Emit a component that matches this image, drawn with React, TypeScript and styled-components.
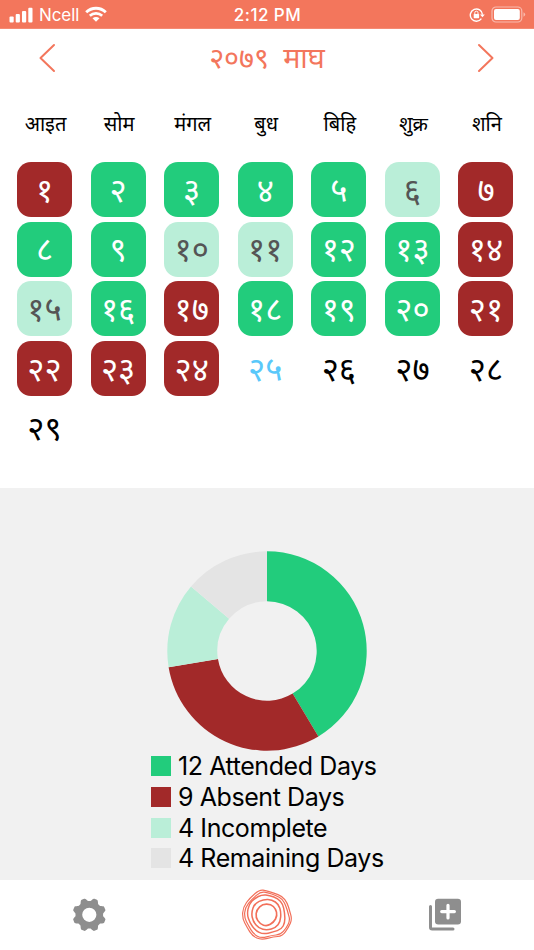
import React from 'react';
import styled, { createGlobalStyle } from 'styled-components';

type Status = 'present' | 'absent' | 'partial' | 'today' | 'upcoming';
type Point = [number, number];

const coral = '#f3765c';
const green = '#22cc7c';
const red = '#a22929';
const mint = '#baeed8';
const silver = '#e4e4e4';
const gray = '#8e8e8e';

const GlobalStyle = createGlobalStyle`
  * { box-sizing: border-box; }
  body {
    margin: 0;
    background: #fff;
    color: #000;
    font-family: Inter, "Noto Sans", "Noto Sans Devanagari", sans-serif;
  }
`;

const Screen = styled.div`
  width: 534px;
  height: 950px;
  display: flex;
  flex-direction: column;
  overflow: hidden;
  background: #fff;
`;

const StatusBar = styled.div`
  flex: 0 0 29px;
  display: grid;
  grid-template-columns: 1fr auto 1fr;
  align-items: center;
  padding: 1px 8px 0 9px;
  background: ${coral};
  border-bottom: 1px solid #f58a73;
  color: #fff;
`;

const StatusGroup = styled.div<{ $end?: boolean }>`
  display: flex;
  align-items: center;
  gap: 6px;
  justify-content: ${p => (p.$end ? 'flex-end' : 'flex-start')};
  svg { display: block; }
`;

const Carrier = styled.span`
  font-size: 17px;
  line-height: 20px;
  letter-spacing: -0.1px;
`;

const Clock = styled.span`
  font-size: 17px;
  line-height: 20px;
  font-weight: 500;
  letter-spacing: 0.45px;
`;

const MonthBar = styled.header`
  flex: 0 0 59px;
  display: flex;
  align-items: center;
  justify-content: space-between;
  padding: 0 38px 2px;
`;

const MonthTitle = styled.h1`
  margin: 0;
  color: ${coral};
  font-size: 28.8px;
  font-weight: 400;
  line-height: 40px;
  word-spacing: 6px;
`;

const ArrowButton = styled.button`
  display: flex;
  padding: 0;
  border: 0;
  background: none;
`;

const Calendar = styled.section`
  flex: 0 0 400px;
  padding: 21px 20.5px 0 17px;
`;

const WeekHeader = styled.div`
  display: flex;
  justify-content: space-between;
  height: 53px;
`;

const Weekday = styled.div`
  width: 55px;
  display: flex;
  justify-content: center;
  padding-left: 2px;
  font-size: 20px;
  line-height: 30px;
  white-space: nowrap;
`;

const DayGrid = styled.div`
  display: grid;
  grid-template-columns: repeat(7, 55px);
  grid-auto-rows: 55px;
  justify-content: space-between;
  row-gap: 4.7px;
`;

const fills: Record<Status, string> = {
  present: green,
  absent: red,
  partial: mint,
  today: 'transparent',
  upcoming: 'transparent',
};

const inks: Record<Status, string> = {
  present: '#fff',
  absent: '#fff',
  partial: '#555',
  today: '#5ac8fa',
  upcoming: '#000',
};

const Day = styled.div<{ $status: Status }>`
  display: flex;
  align-items: center;
  justify-content: center;
  border-radius: 14px;
  background: ${p => fills[p.$status]};
  color: ${p => inks[p.$status]};
  font-size: 33px;
  line-height: 40px;
`;

const Summary = styled.section`
  flex: 0 0 392px;
  display: flex;
  flex-direction: column;
  align-items: center;
  padding-top: 63px;
  background: #f1f1f1;
`;

const Legend = styled.ul`
  width: 232px;
  margin: 0;
  padding: 0;
  list-style: none;
`;

const LegendItem = styled.li`
  height: 30.7px;
  display: flex;
  align-items: center;
  gap: 7px;
  font-size: 25px;
  letter-spacing: -0.42px;
  white-space: nowrap;
`;

const Swatch = styled.span<{ $color: string }>`
  flex: none;
  width: 20px;
  height: 20px;
  background: ${p => p.$color};
`;

const TabBar = styled.nav`
  flex: 1;
  display: grid;
  grid-template-columns: repeat(3, 1fr);
  justify-items: center;
  background: #fff;
`;

const Tab = styled.button`
  width: 80px;
  height: 70px;
  padding: 0;
  border: 0;
  background: none;
  svg { display: block; }
`;

const weekdays = ['आइत', 'सोम', 'मंगल', 'बुध', 'बिहि', 'शुक्र', 'शनि'];

const statusCodes = 'APPPPIAPPIIPPAIPAPPPAAAATUUUU';
const statusByCode: Record<string, Status> = {
  P: 'present',
  A: 'absent',
  I: 'partial',
  T: 'today',
  U: 'upcoming',
};

const toNepali = (n: number) =>
  String(n).replace(/\d/g, d => '०१२३४५६७८९'[Number(d)]);

const summary = [
  { days: 12, label: 'Attended Days', color: green },
  { days: 9, label: 'Absent Days', color: red },
  { days: 4, label: 'Incomplete', color: mint },
  { days: 4, label: 'Remaining Days', color: silver },
];

function Donut() {
  const total = summary.reduce((sum, s) => sum + s.days, 0);
  let start = 0;
  const at = (turn: number, r: number) => {
    const a = turn * Math.PI * 2;
    return `${100 + r * Math.sin(a)} ${100 - r * Math.cos(a)}`;
  };
  return (
    <svg width="200" height="200" viewBox="0 0 200 200">
      {summary.map(s => {
        const from = start / total;
        start += s.days;
        const to = start / total;
        return (
          <path
            key={s.label}
            fill={s.color}
            d={`M${at(from, 99.7)}A99.7 99.7 0 0 1 ${at(to, 99.7)}L${at(to, 49.7)}A49.7 49.7 0 0 0 ${at(from, 49.7)}Z`}
          />
        );
      })}
    </svg>
  );
}

/* Closed curve rounded off through the midpoints of a ring of points. */
function smoothRing(points: Point[]) {
  const mid = (a: Point, b: Point) => `${(a[0] + b[0]) / 2} ${(a[1] + b[1]) / 2}`;
  const n = points.length;
  return (
    `M${mid(points[n - 1], points[0])}` +
    points.map((p, i) => `Q${p[0]} ${p[1]} ${mid(p, points[(i + 1) % n])}`).join('') +
    'Z'
  );
}

const rings: { width: number; points: Point[] }[] = [
  { width: 3.6, points: [[98, 44], [118, 47], [140, 54], [166, 64], [181, 84], [188, 108], [195, 133], [185, 157], [165, 184], [140, 185], [103, 195], [76, 183], [60, 157], [46, 130], [48, 97], [69, 68]] },
  { width: 3.6, points: [[101, 50], [122, 53], [146, 61], [167, 73], [177, 93], [184, 117], [189, 136], [178, 159], [160, 179], [134, 181], [103, 190], [79, 177], [64, 151], [52, 128], [54, 98], [75, 72]] },
  { width: 4.4, points: [[105, 59], [128, 61], [153, 71], [167, 86], [173, 113], [174, 143], [163, 163], [139, 171], [108, 178], [85, 166], [68, 143], [60, 117], [66, 88], [83, 70]] },
  { width: 4.6, points: [[110, 73], [135, 74], [155, 88], [162, 111], [160, 140], [146, 158], [120, 166], [95, 160], [78, 139], [73, 113], [83, 85]] },
  { width: 5, points: [[107, 87], [132, 88], [146, 101], [151, 122], [140, 142], [120, 154], [99, 147], [86, 127], [89, 104]] },
];

function RingsIcon() {
  return (
    <svg width="80" height="70" viewBox="0 15 240 210" fill="none" stroke="#f2705a">
      {rings.map((r, i) => (
        <path key={i} d={smoothRing(r.points)} strokeWidth={r.width} />
      ))}
    </svg>
  );
}

function GearIcon() {
  const outline = Array.from({ length: 160 }, (_, i) => {
    const a = (i / 160) * Math.PI * 2;
    const wave = Math.max(-1, Math.min(0.75, -1.35 * Math.cos(8 * a)));
    const r = 15.5 + 1.7 * wave;
    return `${(40.3 + r * Math.cos(a)).toFixed(2)} ${(34.8 + r * Math.sin(a)).toFixed(2)}`;
  });
  return (
    <svg width="80" height="70" viewBox="0 0 80 70">
      <path
        fill={gray}
        fillRule="evenodd"
        d={`M${outline.join('L')}ZM47.4 34.8a7.1 7.1 0 1 0-14.2 0a7.1 7.1 0 1 0 14.2 0Z`}
      />
    </svg>
  );
}

function AddIcon() {
  return (
    <svg width="80" height="70" viewBox="0 0 80 70" fill="none" strokeLinecap="round">
      <path d="M25.5 26.6V47.3Q25.5 49 27.2 49H48" stroke={gray} strokeWidth="3" />
      <rect x="30" y="18.7" width="26" height="25.8" rx="3.2" fill={gray} />
      <path d="M43 25.3V38M36.7 31.6H49.4" stroke="#fff" strokeWidth="3.2" />
    </svg>
  );
}

function Chevron({ flip }: { flip?: boolean }) {
  return (
    <svg width="20" height="30" viewBox="0 0 20 30" fill="none" stroke={coral} strokeWidth="2" strokeLinecap="round" strokeLinejoin="round">
      <path d={flip ? 'M3 2L16.5 15L3 28' : 'M16 2L2.5 15L16 28'} />
    </svg>
  );
}

function SignalIcon() {
  return (
    <svg width="24" height="16" viewBox="0 0 24 16" fill="#fff">
      <rect x="0.5" y="9.5" width="4.2" height="6" rx="1" />
      <rect x="6.7" y="7" width="4.2" height="8.5" rx="1" />
      <rect x="13" y="4" width="4.2" height="11.5" rx="1" />
      <rect x="19.3" y="0.8" width="4.2" height="14.7" rx="1" />
    </svg>
  );
}

function WifiIcon() {
  return (
    <svg width="22" height="17" viewBox="0 0 22 17" fill="none" stroke="#fff">
      <path d="M1.2 6.2C6.8 .9 15.2 .9 20.8 6.2" strokeWidth="2.9" />
      <path d="M4.8 9.8C8.4 6.6 13.6 6.6 17.2 9.8" strokeWidth="2.7" />
      <path d="M7.5 12.3Q11 9.5 14.5 12.3L11 15.8Z" fill="#fff" stroke="none" />
    </svg>
  );
}

function LockIcon() {
  return (
    <svg width="16" height="16" viewBox="0 0 16 16" fill="none" stroke="#fff">
      <path d="M12.4 11.6A6.1 6.1 0 1 1 13.5 7.6" strokeWidth="1.4" />
      <path d="M11 7.4H15.8L13.4 10.2Z" fill="#fff" stroke="none" />
      <rect x="4.7" y="7" width="5.4" height="4.2" rx=".6" fill="#fff" stroke="none" />
      <path d="M5.8 7V5.8A1.6 1.6 0 0 1 9 5.8V7" strokeWidth="1" />
    </svg>
  );
}

function BatteryIcon() {
  return (
    <svg width="35" height="17" viewBox="0 0 35 17">
      <rect x="1" y="1" width="29.8" height="15" rx="4" fill="none" stroke="#fff" strokeOpacity=".5" strokeWidth="1.2" />
      <rect x="3" y="3" width="25.8" height="11" rx="2" fill="#fff" />
      <path d="M32.5 6.3Q34.2 7 34.2 8.5T32.5 10.7Z" fill="#fff" fillOpacity=".5" />
    </svg>
  );
}

export default function App() {
  return (
    <>
      <GlobalStyle />
      <Screen>
        <StatusBar>
          <StatusGroup>
            <SignalIcon />
            <Carrier>Ncell</Carrier>
            <WifiIcon />
          </StatusGroup>
          <Clock>2:12 PM</Clock>
          <StatusGroup $end>
            <LockIcon />
            <BatteryIcon />
          </StatusGroup>
        </StatusBar>
        <MonthBar>
          <ArrowButton aria-label="Previous month"><Chevron /></ArrowButton>
          <MonthTitle>२०७९ माघ</MonthTitle>
          <ArrowButton aria-label="Next month"><Chevron flip /></ArrowButton>
        </MonthBar>
        <Calendar>
          <WeekHeader>
            {weekdays.map(d => <Weekday key={d}>{d}</Weekday>)}
          </WeekHeader>
          <DayGrid>
            {statusCodes.split('').map((code, i) => (
              <Day key={i} $status={statusByCode[code]}>{toNepali(i + 1)}</Day>
            ))}
          </DayGrid>
        </Calendar>
        <Summary>
          <Donut />
          <Legend>
            {summary.map(s => (
              <LegendItem key={s.label}>
                <Swatch $color={s.color} />
                <span>{s.days} {s.label}</span>
              </LegendItem>
            ))}
          </Legend>
        </Summary>
        <TabBar>
          <Tab aria-label="Settings"><GearIcon /></Tab>
          <Tab aria-label="Attendance"><RingsIcon /></Tab>
          <Tab aria-label="Add"><AddIcon /></Tab>
        </TabBar>
      </Screen>
    </>
  );
}
